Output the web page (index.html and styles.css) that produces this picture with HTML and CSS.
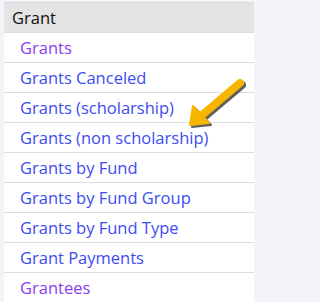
FILE: index.html
```html
<!DOCTYPE html>
<html>
<head>
<meta charset="utf-8">
<link rel="stylesheet" href="styles.css">
</head>
<body>
<div class="panel">
  <div class="header">Grant</div>
  <ul class="list">
    <li class="item"><a class="link visited" href="#">Grants</a></li>
    <li class="item"><a class="link" href="#">Grants Canceled</a></li>
    <li class="item"><a class="link" href="#">Grants (scholarship)</a></li>
    <li class="item"><a class="link" href="#">Grants (non scholarship)</a></li>
    <li class="item"><a class="link" href="#">Grants by Fund</a></li>
    <li class="item"><a class="link" href="#">Grants by Fund Group</a></li>
    <li class="item"><a class="link" href="#">Grants by Fund Type</a></li>
    <li class="item"><a class="link" href="#">Grant Payments</a></li>
    <li class="item"><a class="link visited" href="#">Grantees</a></li>
  </ul>
  <svg class="arrow" width="70" height="60" viewBox="0 0 70 60">
    <g transform="translate(2,2)" fill="#2a2a2a" stroke="#2a2a2a" opacity="0.75">
      <line x1="56" y1="8" x2="17" y2="41" stroke-width="8" stroke-linecap="round"/>
      <polygon points="6,50 9,31 25,48" stroke-width="2" stroke-linejoin="round"/>
    </g>
    <g fill="#f7b500" stroke="#f7b500">
      <line x1="56" y1="8" x2="17" y2="41" stroke-width="8" stroke-linecap="round"/>
      <polygon points="6,50 9,31 25,48" stroke-width="2" stroke-linejoin="round"/>
    </g>
  </svg>
</div>
</body>
</html>
```
FILE: styles.css
```css
html, body {
  margin: 0;
  padding: 0;
}
body {
  background: #f3f3f9;
  font-family: "Open Sans", "DejaVu Sans", sans-serif;
  font-size: 16.5px;
}
.panel {
  position: relative;
  margin: 2px 0 0 4px;
  width: 250px;
  background: #fff;
  border-top: 1px solid #d9d9d9;
}
.header {
  height: 29px;
  line-height: 29px;
  background: #e4e4e4;
  color: #111;
  padding-left: 8px;
}
.list {
  list-style: none;
  margin: 0;
  padding: 0;
}
.item {
  height: 29px;
  line-height: 29px;
  border-top: 1px solid #dcdcdc;
  padding-left: 16px;
}
.link {
  color: #3c4cf3;
  text-decoration: none;
}
.link.visited {
  color: #8a3cee;
}
.arrow {
  position: absolute;
  left: 180px;
  top: 72px;
}
```
